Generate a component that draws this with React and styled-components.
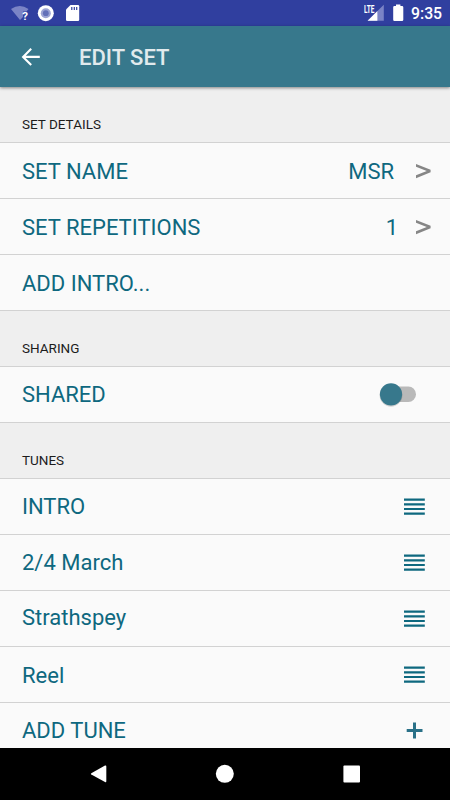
import React, { useState } from 'react';
import styled, { createGlobalStyle } from 'styled-components';

const GlobalStyle = createGlobalStyle`
  * {
    box-sizing: border-box;
  }

  body {
    margin: 0;
    background: #000;
    font-family: Roboto, 'Liberation Sans', sans-serif;
  }
`;

const Screen = styled.div`
  width: 450px;
  height: 800px;
  display: flex;
  flex-direction: column;
  overflow: hidden;
  background: #efefef;
`;

const StatusBar = styled.div`
  flex: none;
  height: 26px;
  display: flex;
  justify-content: space-between;
  background: #303f9f;
`;

const StatusIcons = styled.svg`
  display: block;
  height: 26px;
`;

const StatusRight = styled.div`
  display: flex;
`;

const Clock = styled.span`
  width: 39px;
  color: #fff;
  font-size: 15.8px;
  font-weight: 500;
  line-height: 28px;
  white-space: nowrap;
`;

const Toolbar = styled.header`
  flex: none;
  height: 61px;
  display: flex;
  align-items: center;
  padding-left: 19px;
  background: #37788c;
  box-shadow: 0 1px 3px rgba(0, 0, 0, 0.45);
  z-index: 1;
`;

const BackButton = styled.button`
  width: 24px;
  height: 24px;
  padding: 0;
  margin-right: 36px;
  border: none;
  background: transparent;

  svg {
    display: block;
  }
`;

const Title = styled.h1`
  margin: 0;
  padding-top: 3px;
  color: #e1eaed;
  font-size: 22px;
  font-weight: 500;
  line-height: 26px;
`;

const Content = styled.main`
  flex: 1;
  min-height: 0;
  overflow: hidden;
`;

const SectionHeader = styled.h2`
  height: 56px;
  margin: 0;
  padding: 29px 0 0 22px;
  border-bottom: 1px solid #d2d2d2;
  color: #1c1c1c;
  font-size: 13.5px;
  font-weight: 400;
  line-height: 16px;
`;

const Row = styled.div`
  height: 56px;
  display: flex;
  align-items: center;
  padding: 0 18px 0 22px;
  border-bottom: 1px solid #d2d2d2;
  background: #fafafa;
  color: #0e687f;
  font-size: 22px;
  line-height: 26px;
`;

const Label = styled.span`
  flex: 1;
  padding-top: ${({ $lift = 0 }) => 2 - $lift}px;
  padding-bottom: ${({ $lift = 0 }) => $lift}px;
`;

const Value = styled.span`
  padding-top: 2px;
  margin-right: ${({ $gap = 22 }) => $gap}px;
`;

const Chevron = styled.svg`
  display: block;
  margin-right: 1px;
`;

const Toggle = styled.button`
  width: 38px;
  height: 26px;
  margin-right: 14px;
  margin-bottom: 1px;
  padding: 0;
  border: none;
  background: transparent;

  svg {
    display: block;
    overflow: visible;
  }
`;

const RowIcon = styled.svg`
  display: block;
  margin-right: 7px;
`;

const NavBar = styled.nav`
  flex: none;
  height: 52px;
  display: flex;
  align-items: center;
  justify-content: space-between;
  padding: 0 89px 0 90px;
  background: #000;
`;

const NavButton = styled.button`
  width: 18px;
  height: 18px;
  padding: 0;
  border: none;
  background: transparent;

  svg {
    display: block;
    overflow: visible;
  }
`;

const tunes = [
  { name: 'INTRO', lift: 1 },
  { name: '2/4 March', lift: 1 },
  { name: 'Strathspey', lift: 2 },
  { name: 'Reel' },
];

const ChevronIcon = () => (
  <Chevron width="15" height="16" viewBox="0 0 15 16">
    <path d="M0 .9 L14.6 6.8 V9.2 L0 15.2 V12.3 L10.8 8 L0 3.8 Z" fill="#868686" />
  </Chevron>
);

const DragIcon = () => (
  <RowIcon width="21" height="18" viewBox="0 0 21 18">
    <path d="M0 1.6h20.8M0 6.3h20.8M0 11h20.8M0 15.7h20.8" stroke="#0e687f" strokeWidth="2.2" />
  </RowIcon>
);

const App = () => {
  const [shared, setShared] = useState(false);

  return (
    <>
      <GlobalStyle />
      <Screen>
        <StatusBar>
          <StatusIcons width="90" viewBox="0 0 90 26">
            <path d="M11 9 Q19.8 2.8 28.5 9 L26.5 11.5 H23 V17 L20 20 Z" fill="#7b84c6" />
            <text x="22.2" y="19.5" fill="#fff" fontSize="11.5" fontWeight="700">?</text>
            <circle cx="45.8" cy="13.2" r="8" fill="#fff" />
            <circle cx="45.8" cy="13.2" r="5" fill="#9ca4d4" />
            <circle cx="45.8" cy="13.2" r="2.9" fill="#6370b9" />
            <path d="M70.5 5 H78 Q79.2 5 79.2 6.2 V19.7 Q79.2 20.9 78 20.9 H67.2 Q66 20.9 66 19.7 V9.5 Z" fill="#fff" />
            <path d="M71.8 7v3M74.3 7v3M76.7 7v3" stroke="#303f9f" strokeWidth="1.2" />
          </StatusIcons>
          <StatusRight>
            <StatusIcons width="47" viewBox="0 0 47 26">
              <text x="0" y="12.6" fill="#fff" fontSize="10.5" fontWeight="700" textLength="10.5" lengthAdjust="spacingAndGlyphs">LTE</text>
              <path d="M19.8 4.7 V20.8 H3.6 L11 13.4 H13.2 V11.2 Z" fill="#7b84c6" />
              <path d="M3.6 20.8 L13.4 11 V20.8 Z" fill="#fff" />
              <path d="M32 5.2 V4.6 H36.4 V6 H38 Q39.3 6 39.3 7.2 V19.7 Q39.3 20.9 38 20.9 H30.4 Q29.2 20.9 29.2 19.7 V7.2 Q29.2 6 30.4 6 H32 Z" fill="#fff" />
            </StatusIcons>
            <Clock>9:35</Clock>
          </StatusRight>
        </StatusBar>

        <Toolbar>
          <BackButton aria-label="Back">
            <svg width="24" height="24" viewBox="0 0 24 24">
              <path d="M20.8 11.9 H4.5 M12.2 3.8 L4.1 11.9 L12.2 20" fill="none" stroke="#fff" strokeWidth="2.1" />
            </svg>
          </BackButton>
          <Title>EDIT SET</Title>
        </Toolbar>

        <Content>
          <SectionHeader>SET DETAILS</SectionHeader>
          <Row>
            <Label>SET NAME</Label>
            <Value>MSR</Value>
            <ChevronIcon />
          </Row>
          <Row>
            <Label>SET REPETITIONS</Label>
            <Value $gap={18}>1</Value>
            <ChevronIcon />
          </Row>
          <Row>
            <Label>ADD INTRO...</Label>
          </Row>

          <SectionHeader>SHARING</SectionHeader>
          <Row>
            <Label $lift={1}>SHARED</Label>
            <Toggle role="switch" aria-checked={shared} aria-label="Shared" onClick={() => setShared(!shared)}>
              <svg width="38" height="26" viewBox="0 0 38 26">
                <rect x="4" y="5.5" width="32" height="15.4" rx="7.7" fill={shared ? '#9bbbc5' : '#b9b9b9'} />
                <circle cx={shared ? 26 : 11} cy="14.3" r="11.4" fill="#000" opacity="0.16" />
                <circle cx={shared ? 26 : 11} cy="13.3" r="11.1" fill="#37788c" />
              </svg>
            </Toggle>
          </Row>

          <SectionHeader>TUNES</SectionHeader>
          {tunes.map((tune) => (
            <Row key={tune.name}>
              <Label $lift={tune.lift}>{tune.name}</Label>
              <DragIcon />
            </Row>
          ))}
          <Row>
            <Label $lift={1}>ADD TUNE</Label>
            <RowIcon width="21" height="18" viewBox="0 0 21 18">
              <path d="M2.7 8.6h15.8M10.5 .6v16" stroke="#2a7188" strokeWidth="3" />
            </RowIcon>
          </Row>
        </Content>

        <NavBar>
          <NavButton aria-label="Back">
            <svg width="18" height="18" viewBox="0 0 18 18">
              <path d="M1.3 8.2 L15 .6 Q16.3 .1 16.3 1.4 V16.2 Q16.3 17.7 15 17 L1.3 9.6 Q.4 8.9 1.3 8.2 Z" fill="#fff" />
            </svg>
          </NavButton>
          <NavButton aria-label="Home">
            <svg width="18" height="18" viewBox="0 0 18 18">
              <circle cx="7.8" cy="8.8" r="9" fill="#fff" />
            </svg>
          </NavButton>
          <NavButton aria-label="Recents">
            <svg width="18" height="18" viewBox="0 0 18 18">
              <rect x=".4" y=".6" width="16.6" height="16.8" rx="1" fill="#fff" />
            </svg>
          </NavButton>
        </NavBar>
      </Screen>
    </>
  );
};

export default App;
